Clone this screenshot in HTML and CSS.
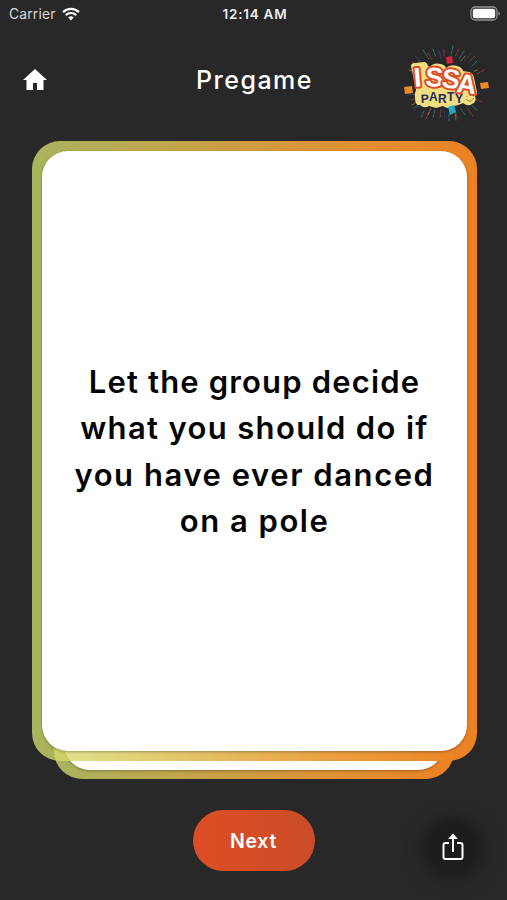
FILE: index.html
```html
<!DOCTYPE html>
<html lang="en">
<head>
    <meta charset="utf-8">
    <title>Pregame</title>
    <link rel="stylesheet" href="styles.css">
</head>
<body>
    <div class="status-bar">
        <div class="carrier">
            <span>Carrier</span>
            <svg class="wifi" viewBox="0 0 18 14" width="18" height="14">
                <path d="M1 5.1a11.5 11.5 0 0 1 16 0M3.8 8.1a7.5 7.5 0 0 1 10.4 0" fill="none" stroke="#fff" stroke-width="2.2"/>
                <path d="M6.2 10.6a4 4 0 0 1 5.6 0L9 13.6z" fill="#fff"/>
            </svg>
        </div>
        <span class="time">12:14 AM</span>
        <svg class="battery" viewBox="0 0 31 16" width="31" height="16">
            <rect x="1" y="1" width="26" height="13" rx="4" fill="none" stroke="#929292" stroke-width="1.3"/>
            <rect x="2.8" y="2.8" width="22.4" height="9.4" rx="2.2" fill="#fff"/>
            <path d="M28.4 5.4q3.2 2.1 0 4.2z" fill="#929292"/>
        </svg>
    </div>

    <header class="header">
        <svg class="home" viewBox="0 0 24 21" width="24" height="21">
            <path d="M12 0L0 11h3.5v10H10v-7h4v7h6.500V11H24z" fill="#fff"/>
        </svg>
        <h1>Pregame</h1>
        <svg class="logo" viewBox="400 42 92 84" width="92" height="84">
            <g fill="none" stroke-width=".9" stroke-linecap="round" stroke-dasharray="3 1.5" opacity=".8">
                <path stroke="#2497a8" d="M423 50l6 9M433 49l3 8M453 46l-2 9M464 51l-5 8M477 61l-6 6M418 105l-4 3M424 111l-3 6M435 110l-2 7M461 109l4 6M472 106l5 4M449 114v7"/>
                <path stroke="#b64a3a" d="M412 62l7 4M428 53l4 7M444 50v6M459 49l-4 8M475 56l-6 6M484 70l-7 4M411 100l8-3M429 112l-3 7M441 110l-1 8M455 111l3 8M467 108l6 8M475 99l7 3"/>
                <path stroke="#344f96" d="M415 56l6 6M439 51l2 7M471 53l-6 7M407 95l8-1M414 111l5-5M444 111l1 7M480 94l-5-2"/>
                <path stroke="#b58a32" d="M409 70l7 2M465 56l-4 5M412 105l6-4M431 108l-3 7M455 114l1 6M477 70l-4 2"/>
            </g>
            <path fill="#efdf80" d="M411 66q0-3 4-3l9-1q3 0 4 4l2 1q3-5 11-3 4 1 5 4 4-4 11-2 5 1 6 5l6 1q4 1 5 6l3 14q0 3-2 4 2 6-3 8-4 3-9-1-6 3-10 3-5 4-10 0l-7 2-7-2q-5 3-9-1-5 1-5-7-1-4 1-8z"/>
            <path fill="#e98a2b" d="M404 87l8-1 1 7-8 1zM480 83l8-1 1 6-8 1z"/>
            <path fill="#d82045" d="M446 57l6-1 1 7-6 1z"/>
            <path fill="#24a8c4" d="M448 107l6-2 2 7-6 3z"/>
            <g class="issa">
                <text x="414.5" y="87" transform="rotate(-5 414 87)">I</text>
                <text x="425" y="86" transform="rotate(3 425 86)">S</text>
                <text x="441" y="87" transform="rotate(7 441 87)">S</text>
                <text x="456" y="92" transform="rotate(7 456 92)">A</text>
            </g>
            <g class="party">
                <text x="421" y="103" transform="rotate(-3 421 103)">P</text>
                <text x="429" y="101">A</text>
                <text x="438" y="103">R</text>
                <text x="447" y="101">T</text>
                <text x="455" y="103">Y</text>
            </g>
            <path d="M466 99q4 5 8-1M467 96v1M472 95v1" fill="none" stroke="#9a873b"/>
        </svg>
    </header>

    <main class="deck">
        <div class="card card-back"><div class="card-face"></div></div>
        <div class="card card-front">
            <div class="card-face">
                <p class="prompt">
                    <span class="line line-1">Let the group decide</span>
                    <span class="line line-2">what you should do if</span>
                    <span class="line line-3">you have ever danced</span>
                    <span class="line line-4">on a pole</span>
                </p>
            </div>
        </div>
    </main>

    <footer class="footer">
        <button class="next">Next</button>
        <button class="share" aria-label="Share">
            <svg viewBox="0 0 22 28" width="22" height="28">
                <path d="M7 10H3.5q-2 0-2 2v12q0 2 2 2h15q2 0 2-2V12q0-2-2-2H15M11 19V3" fill="none" stroke="#fff" stroke-width="2"/>
                <path d="M11 .5L6 6h10z" fill="#fff"/>
            </svg>
        </button>
    </footer>
</body>
</html>
```
FILE: styles.css
```css
* {
    box-sizing: border-box;
}
body {
    margin: 0;
    height: 900px;
    background: #282828;
    color: #fff;
    font-family: Inter, "Liberation Sans", sans-serif;
    display: flex;
    flex-direction: column;
    overflow: hidden;
}
.status-bar {
    height: 28px;
    padding: 0 6px 0 9px;
    display: grid;
    grid-template-columns: 1fr auto 1fr;
    align-items: center;
    font-size: 13.8px;
}
.carrier {
    display: flex;
    align-items: center;
    gap: 6px;
    color: #d8d8d8;
    letter-spacing: 0.2px;
}
.time {
    font-weight: 600;
    font-size: 13.5px;
    letter-spacing: 0.75px;
    color: #eee;
}
.battery {
    justify-self: end;
}
.header {
    height: 113px;
    padding: 14px 15px 0 23px;
    display: grid;
    grid-template-columns: 86px 1fr 92px;
    align-items: start;
}
.home {
    margin-top: 27px;
}
h1 {
    margin: 23px 0 0;
    font-size: 25px;
    line-height: 30px;
    font-weight: 500;
    letter-spacing: 1.5px;
    text-align: center;
}
.issa text {
    font: bold 27px "Liberation Sans", sans-serif;
    fill: #fff;
    stroke: #df4a27;
    stroke-width: 4px;
    stroke-linejoin: round;
    paint-order: stroke;
}
.party text {
    font: bold 12px "Liberation Sans", sans-serif;
    fill: #29265e;
}
.deck {
    position: relative;
    height: 638px;
    padding: 0 30px 18px 32px;
}
.card {
    padding: 10px;
    border-radius: 28px;
    background: linear-gradient(to right, rgba(212, 227, 113, 0.75), rgba(234, 151, 52, 0.95) 70%, #eb8122);
}
.card-front {
    position: relative;
    height: 620px;
}
.card-back {
    position: absolute;
    top: 100px;
    left: 54px;
    right: 53px;
    bottom: 0;
    padding-bottom: 9px;
}
.card-face {
    height: 100%;
    border-radius: 26px;
    background: #fff;
    box-shadow: 0 1px 3px rgba(0, 0, 0, 0.3);
    display: flex;
    align-items: center;
    justify-content: center;
}
.prompt {
    margin: 1px 0 0;
    color: #050505;
    font-size: 31px;
    line-height: 46.5px;
    font-weight: 600;
    text-align: center;
    white-space: nowrap;
}
.line {
    display: block;
}
.line-1 {
    letter-spacing: 1.15px;
}
.line-2 {
    letter-spacing: 1.35px;
}
.line-3 {
    letter-spacing: 1.55px;
}
.line-4 {
    letter-spacing: 1.5px;
}
.footer {
    flex: 1;
    padding: 31px 25px 0;
    display: grid;
    grid-template-columns: 1fr 122px 1fr;
    align-items: start;
}
button {
    border: 0;
    padding: 0;
    color: #fff;
    font: inherit;
}
.next {
    grid-column: 2;
    height: 61px;
    border-radius: 31px;
    background: linear-gradient(to right, #de4d25, #c94d28);
    font-size: 19.5px;
    font-weight: 600;
    letter-spacing: 0.7px;
}
.share {
    justify-self: end;
    width: 58px;
    height: 58px;
    margin-top: 8px;
    border-radius: 50%;
    background: radial-gradient(circle, #1d1d1d 50%, #202020 70%);
    box-shadow: 0 2px 14px 4px #202020;
    display: flex;
    align-items: center;
    justify-content: center;
}
```
